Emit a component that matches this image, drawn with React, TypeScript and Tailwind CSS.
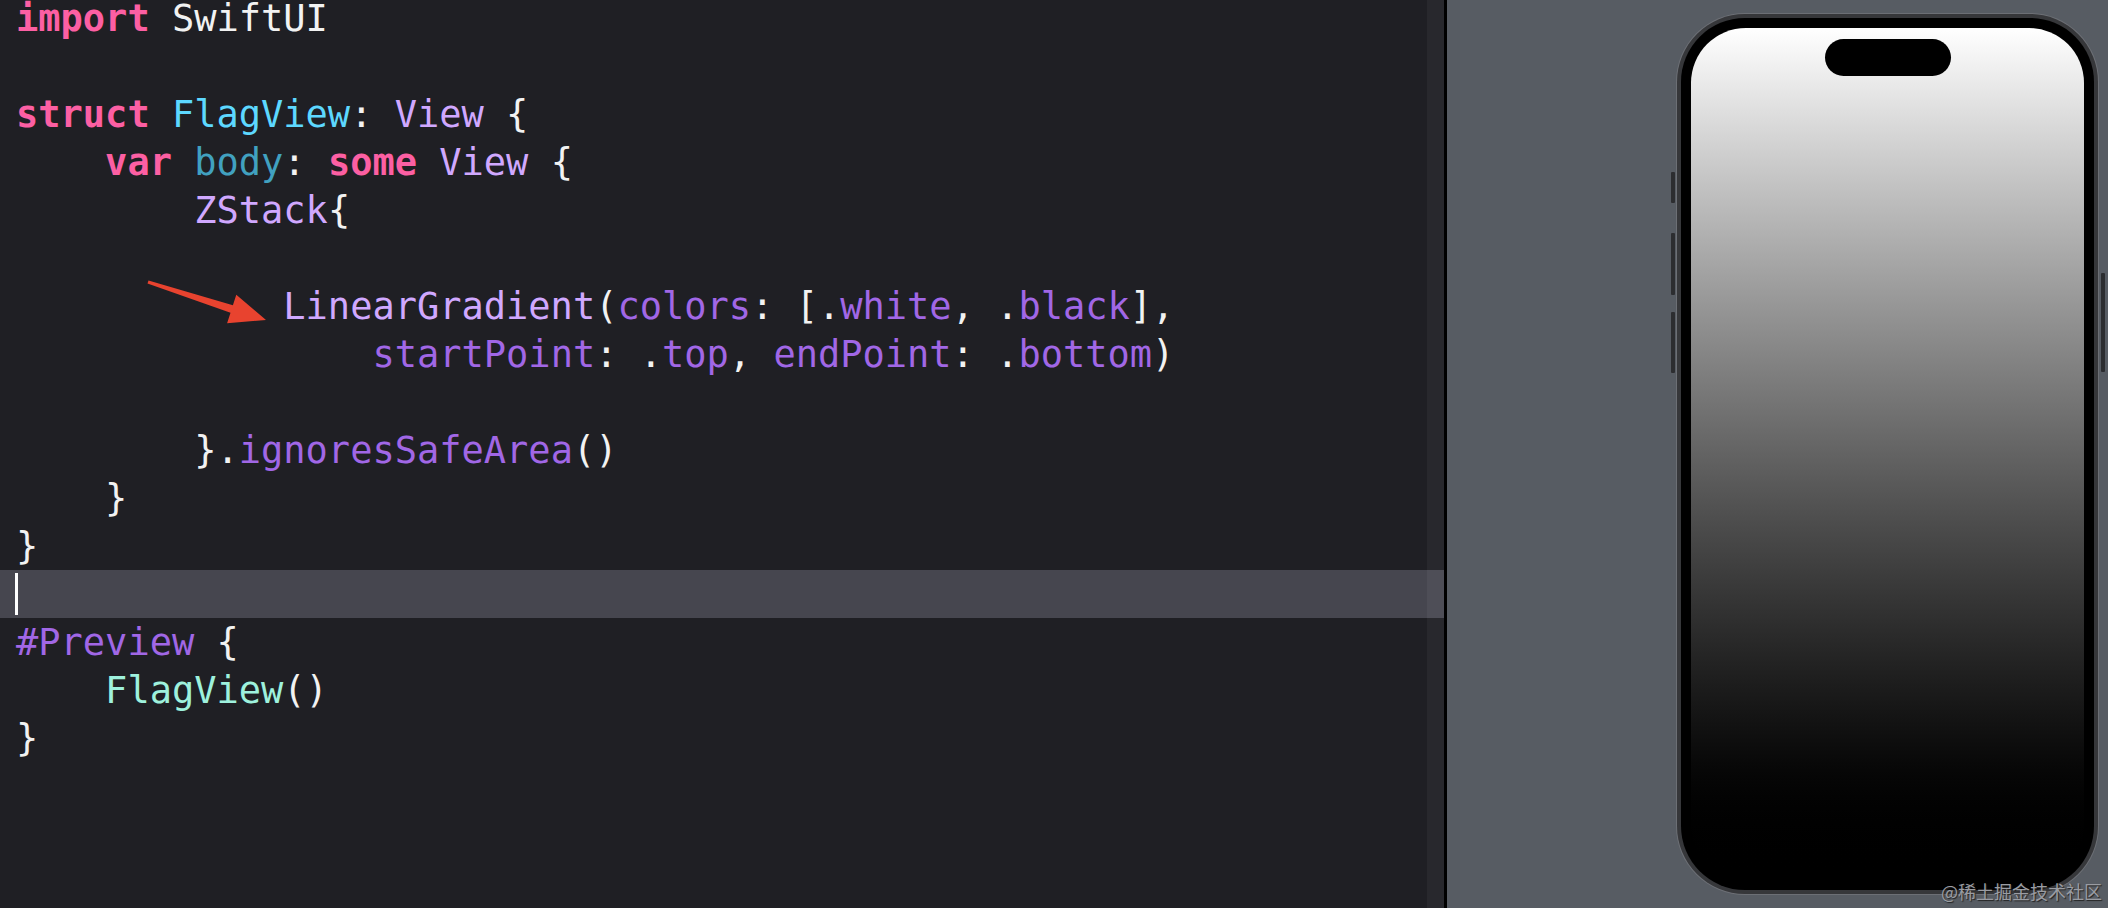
import type { ReactNode } from 'react';

// ─── Types ────────────────────────────────────────────────────────────────────

type Kind = 'kw' | 'plain' | 'decl' | 'type' | 'prop' | 'fn' | 'proj';

type Token = [Kind, string];

// ─── Palette (Xcode "Default (Dark)") ────────────────────────────────────────

const tokenClass: Record<Kind, string> = {
    kw: 'text-[#fc5fa3] font-bold',
    plain: 'text-[#f2f2f2]',
    decl: 'text-[#5dd8ff]',
    type: 'text-[#d0a8ff]',
    prop: 'text-[#41a1c0]',
    fn: 'text-[#a167e6]',
    proj: 'text-[#9ef1dd]',
};

const CURSOR_LINE = 12;

const lines: Token[][] = [
    [['kw', 'import'], ['plain', ' SwiftUI']],
    [],
    [['kw', 'struct'], ['plain', ' '], ['decl', 'FlagView'], ['plain', ': '], ['type', 'View'], ['plain', ' {']],
    [['plain', '    '], ['kw', 'var'], ['plain', ' '], ['prop', 'body'], ['plain', ': '], ['kw', 'some'], ['plain', ' '], ['type', 'View'], ['plain', ' {']],
    [['plain', '        '], ['type', 'ZStack'], ['plain', '{']],
    [],
    [
        ['plain', '            '],
        ['type', 'LinearGradient'],
        ['plain', '('],
        ['fn', 'colors'],
        ['plain', ': [.'],
        ['fn', 'white'],
        ['plain', ', .'],
        ['fn', 'black'],
        ['plain', '],'],
    ],
    [
        ['plain', '                '],
        ['fn', 'startPoint'],
        ['plain', ': .'],
        ['fn', 'top'],
        ['plain', ', '],
        ['fn', 'endPoint'],
        ['plain', ': .'],
        ['fn', 'bottom'],
        ['plain', ')'],
    ],
    [],
    [['plain', '        }.'], ['fn', 'ignoresSafeArea'], ['plain', '()']],
    [['plain', '    }']],
    [['plain', '}']],
    [],
    [['fn', '#Preview'], ['plain', ' {']],
    [['plain', '    '], ['proj', 'FlagView'], ['plain', '()']],
    [['plain', '}']],
];

// ─── Editor ───────────────────────────────────────────────────────────────────

function CodeLine({ tokens, current }: { tokens: Token[]; current: boolean }) {
    return (
        <div
            className={
                current
                    ? 'flex h-[48px] items-center whitespace-pre pl-[16px] bg-[#46464f]'
                    : 'flex h-[48px] items-center whitespace-pre pl-[16px]'
            }
        >
            {current && <div className="-ml-[1px] h-[42px] w-[3px] bg-white" />}
            {tokens.map(([kind, text], i) => (
                <span key={i} className={`pt-[2px] ${tokenClass[kind]}`}>
                    {text}
                </span>
            ))}
        </div>
    );
}

function Arrow() {
    return (
        <svg
            className="absolute left-[140px] top-[276px]"
            width="135"
            height="62"
            viewBox="0 0 135 62"
        >
            <polygon
                fill="#e8432f"
                points="8.5,10.6 92.9,35.2 96.3,24.7 126,50 87.1,53.3 90.5,42.8 7.5,13.4"
            />
        </svg>
    );
}

function Editor() {
    return (
        <div className="flex w-[1444px] shrink-0 bg-[#1f1f24]">
            <div className="relative -mt-[6px] flex-1 font-['DejaVu_Sans_Mono','Liberation_Mono',monospace] text-[37px] leading-[36px]">
                {lines.map((tokens, i) => (
                    <CodeLine key={i} tokens={tokens} current={i === CURSOR_LINE} />
                ))}
                <Arrow />
            </div>
            {/* scroller track */}
            <div className="w-[17px] bg-[#28282d] pt-[570px]">
                <div className="h-[48px] bg-[#4e4e57]" />
            </div>
        </div>
    );
}

// ─── Preview canvas ───────────────────────────────────────────────────────────

function SideButton({ className }: { className: string }): ReactNode {
    return <div className={`absolute w-[4px] rounded-[1px] bg-[#2c2d30] ${className}`} />;
}

function Phone() {
    return (
        <div className="relative">
            <SideButton className="-left-[6px] top-[158px] h-[31px]" />
            <SideButton className="-left-[6px] top-[219px] h-[62px]" />
            <SideButton className="-left-[6px] top-[298px] h-[61px]" />
            <SideButton className="-right-[7px] top-[259px] h-[99px]" />

            <div className="rounded-[68px] bg-[#36373a] p-[4px] shadow-[0_0_0_1px_#6c6f75]">
                <div className="rounded-[64px] bg-black p-[10px]">
                    <div className="flex h-[852px] w-[393px] justify-center rounded-[55px] bg-gradient-to-b from-white to-black pt-[11px]">
                        <div className="h-[37px] w-[126px] rounded-full bg-black" />
                    </div>
                </div>
            </div>
        </div>
    );
}

function Canvas() {
    return (
        <div className="flex flex-1 justify-end bg-[#575c63] pr-[10px] pt-[14px]">
            <Phone />
        </div>
    );
}

// ─── App ──────────────────────────────────────────────────────────────────────

export default function App() {
    return (
        <div className="relative flex h-[908px] w-[2108px] overflow-hidden">
            <Editor />
            <div className="w-[3px] shrink-0 bg-black" />
            <Canvas />

            <div className="absolute bottom-[5px] right-[6px] font-['Noto_Sans_CJK_SC',sans-serif] text-[18px] leading-[24px] text-[#9a9ca2] [text-shadow:1px_1px_1px_#222]">
                @稀土掘金技术社区
            </div>
        </div>
    );
}
